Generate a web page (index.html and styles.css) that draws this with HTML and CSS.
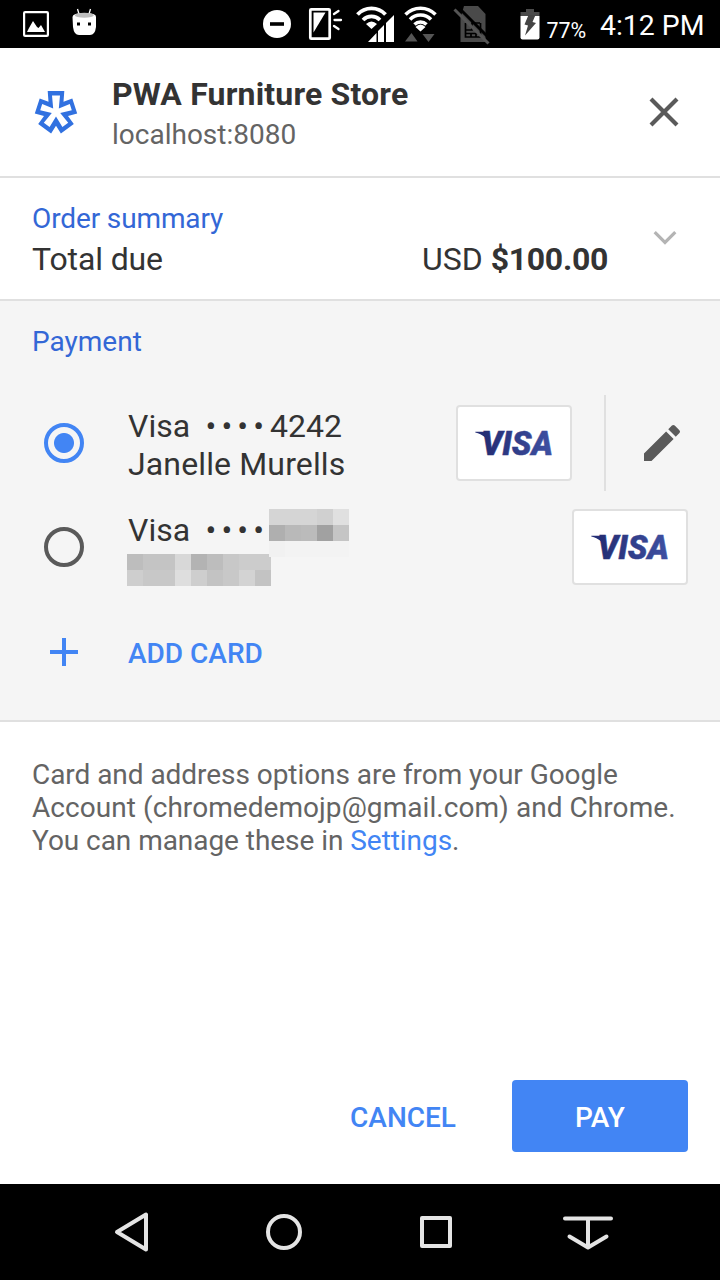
FILE: index.html
```html
<!DOCTYPE html>
<html lang="en">
<head>
<meta charset="utf-8">
<title>PWA Furniture Store</title>
<link rel="stylesheet" href="styles.css">
</head>
<body>
<svg class="defs" width="0" height="0" aria-hidden="true">
  <defs>
    <linearGradient id="visa-blue" x1="0" y1="0" x2="1" y2="0">
      <stop offset="0" stop-color="#232c72"/><stop offset="1" stop-color="#3f51a3"/>
    </linearGradient>
    <symbol id="visa" viewBox="0 0 112 72">
      <path d="M17.300 24.800h11.500l2.500 12c-2-5.500-6.500-9.500-14-11.300z" fill="#252e76"/>
      <text class="visa-word" x="23.500" y="48.400" textLength="71.500" lengthAdjust="spacingAndGlyphs" fill="url(#visa-blue)" stroke="url(#visa-blue)" stroke-width=".5">VISA</text>
    </symbol>
  </defs>
</svg>
<div class="screen">
  <div class="status">
    <svg width="110" height="48" viewBox="0 0 110 48">
      <rect x="24.100" y="12.100" width="23.800" height="23.800" rx="1" fill="none" stroke="#fff" stroke-width="2.200"/>
      <path d="M27 32l2-4 4-7 4 6 1.500 1 2.500-3 4 7z" fill="#fff"/>
      <path d="M72.500 17q0-4 12-4t11.500 4v10q-1 8-6 8h-11q-5 0-6-8z" fill="#fff"/>
      <path d="M77.500 9l1.500 5M90.500 9L89 14" stroke="#fff" stroke-width="1.300"/>
      <ellipse cx="84.300" cy="15.300" rx="9.500" ry="2.500" fill="#bdbdbd"/>
      <path d="M77 22.500h3v3h-3zM88 22.500h3v3h-3z" fill="#000"/>
    </svg>
    <svg class="status-right" width="290" height="48" viewBox="255 0 290 48">
      <circle cx="277" cy="24" r="14" fill="#fff"/>
      <path d="M270 24h14" stroke="#000" stroke-width="3.600"/>
      <rect x="310.300" y="9.300" width="19.400" height="29.400" rx="1" fill="none" stroke="#fff" stroke-width="2.700"/>
      <path d="M313.500 12.500h12l-12 20z" fill="#fff"/>
      <path d="M334 14l4.500-3M334.500 20h6.500M334 26l4.500 3" stroke="#fff" stroke-width="2.300" stroke-linecap="round"/>
      <g fill="none" stroke="#fff" stroke-width="3.800">
        <path d="M357.500 14.500a19 19 0 0 1 28 0M363 20a12 12 0 0 1 17 0"/>
        <path d="M405.500 14.500a21 21 0 0 1 30 0M410 19.500a14.500 14.500 0 0 1 21 0M414.500 24.500a8.500 8.500 0 0 1 12 0" stroke-width="3.500"/>
      </g>
      <path d="M366 24q5.500-5 11 0l-5.500 5zM415.500 27q5-5 10 0l-5 4.500z" fill="#fff"/>
      <path d="M368 42l8.500-9V42zM378 42V31l6-6V42zM386 42V23l8-8V42z" fill="#fff"/>
      <path d="M405 41.500l6.500-8.500 6 8.500zM422.500 34h12l-6 8z" fill="#555"/>
      <path d="M464 6h14l7.500 8v28h-25V18z" fill="#4a4a4a"/>
      <path d="M465.500 23v14h15V23M466 30h6v-7h8M466 33.500h14M471 33.500v4M476 33.500v4" fill="none" stroke="#000" stroke-width="1.700"/>
      <path d="M457.500 6.500l33 33" stroke="#000" stroke-width="3"/>
      <path d="M454.500 9.500l34 34" stroke="#555" stroke-width="3"/>
      <path d="M520.500 16v-4h5.500V9h8v3h5.500v4z" fill="#4a4a4a"/>
      <path d="M520.500 16h19v21.500q0 2-2 2h-15q-2 0-2-2z" fill="#fff"/>
      <path d="M528.500 15h7l-3 7 3.500 1L525 35.500l3-10-3.500-1z" fill="#444"/>
    </svg>
    <span class="battery">77%</span>
    <span class="clock">4:12 PM</span>
  </div>

  <header class="merchant">
    <svg class="merchant-logo" width="48" height="48" viewBox="32 88 48 48">
      <path fill="#3171e0" d="M47.700 91h16.600l-.8 10.700 8.800-3.200 4.900 15-9.200 2.600 5.800 7.900-12.900 9.600-4.900-7.900-4.900 7.900-12.900-9.600 5.800-7.900-9.200-2.600 4.900-15 8.800 3.200z"/>
      <path fill="#fff" d="M52 95.500h8l-1.200 13 11-4.600 2 6.400-11.600 2.700 8 9.700-5.800 4.300-6.400-10.500-6.400 10.500-5.800-4.300 8-9.700-11.600-2.700 2-6.400 11 4.600z"/>
    </svg>
    <div class="merchant-name">
      <h1>PWA Furniture Store</h1>
      <p>localhost:8080</p>
    </div>
    <svg class="close" width="32" height="32" viewBox="0 0 32 32"><path d="M3 3l26 26M29 3L3 29" stroke="#5a5a5a" stroke-width="4.200"/></svg>
  </header>

  <section class="summary">
    <div class="summary-text">
      <h2 class="tight">Order summary</h2>
      <div class="total"><span class="tight">Total due</span><span>USD <b>$100.00</b></span></div>
    </div>
    <svg class="chevron" width="24" height="16" viewBox="0 0 24 16"><path d="M1.700 2.200L12 12.500 22.300 2.200" fill="none" stroke="#b4b4b4" stroke-width="3.200"/></svg>
  </section>

  <section class="payment">
    <h2>Payment</h2>
    <div class="option">
      <span class="radio selected"></span>
      <div class="label">
        <div class="line">Visa <span class="dots">••••</span><span class="digits">4242</span></div>
        <div class="line holder">Janelle Murells</div>
      </div>
      <svg class="card" width="116" height="76"><use href="#visa" width="112" height="72"/></svg>
      <div class="edit">
        <svg width="48" height="48" viewBox="0 0 24 24"><path fill="#5a5a5a" d="M3 17.250V21h3.750L17.810 9.940l-3.750-3.750L3 17.250zM20.710 7.040a1 1 0 0 0 0-1.410l-2.340-2.340a1 1 0 0 0-1.410 0l-1.830 1.830 3.750 3.750 1.830-1.830z"/></svg>
      </div>
    </div>
    <div class="option">
      <span class="radio"></span>
      <div class="label">
        <div class="line">Visa <span class="dots">••••</span><svg class="mask-number" width="80" height="48" viewBox="0 0 5 3" shape-rendering="crispEdges">
          <path fill="#d5d5d5" d="M0 0h3v1H0z"/><path fill="#d0d0d0" d="M3 0h1v1H3z"/><path fill="#e0e0e0" d="M4 0h1v1H4z"/>
          <path fill="#afafaf" d="M0 1h1v1H0z"/><path fill="#b9b9b9" d="M1 1h1v1H1z"/><path fill="#bbb" d="M2 1h1v1H2z"/><path fill="#a1a1a1" d="M3 1h1v1H3z"/><path fill="#c5c5c5" d="M4 1h1v1H4z"/>
          <path fill="#f1f1f1" d="M0 2h1v1H0z"/><path fill="#f3f3f3" d="M1 2h4v1H1z"/></svg></div>
        <div class="line"><svg class="mask-name" width="144" height="32" viewBox="0 0 9 2" shape-rendering="crispEdges">
          <path fill="#bdbdbd" d="M0 0h1v1H0zM5 0h1v1H5z"/><path fill="#c4c4c4" d="M1 0h2v1H1z"/><path fill="#d8d8d8" d="M3 0h1v1H3z"/><path fill="#b3b3b3" d="M4 0h1v1H4z"/><path fill="#c8c8c8" d="M6 0h1v1H6zM1 1h2v1H1zM6 1h1v1H6z"/><path fill="#ccc" d="M7 0h2v1H7z"/>
          <path fill="#cecece" d="M0 1h1v1H0zM4 1h1v1H4z"/><path fill="#dedede" d="M3 1h1v1H3z"/><path fill="#c3c3c3" d="M5 1h1v1H5zM8 1h1v1H8z"/><path fill="#d3d3d3" d="M7 1h1v1H7z"/></svg></div>
      </div>
      <svg class="card" width="116" height="76"><use href="#visa" width="112" height="72"/></svg>
    </div>
    <div class="add">
      <svg width="28" height="28" viewBox="0 0 28 28"><path d="M14 0v28M0 14h28" stroke="#4285f4" stroke-width="4"/></svg>
      <span>ADD CARD</span>
    </div>
  </section>

  <p class="note"><span class="tight-line">Card and address options are from your Google</span><br><span class="wide-line">Account (chromedemojp@gmail.com) and Chrome.</span><br><span class="tight-line">You can manage these in <a>Settings</a>.</span></p>

  <div class="actions">
    <span class="cancel">CANCEL</span>
    <span class="pay">PAY</span>
  </div>

  <nav class="navbar">
    <svg width="720" height="96" viewBox="0 1184 720 96" fill="none" stroke="#e4e4e4" stroke-width="4" stroke-linecap="round" stroke-linejoin="round">
      <path d="M117 1232l29-17.500v35z"/>
      <circle cx="284" cy="1232" r="16"/>
      <rect x="422" y="1218" width="28" height="28"/>
      <path d="M565 1218.500h46M588 1219v28M569.500 1236.500l18.500 11 18.500-11"/>
    </svg>
  </nav>
</div>
</body>
</html>
```
FILE: styles.css
```css
* { box-sizing: border-box; margin: 0; padding: 0; }
body { font-family: Roboto, sans-serif; color: #333; background: #fff; }
svg { display: block; flex: none; }
.defs { position: absolute; }
.screen { width: 720px; height: 1280px; display: flex; flex-direction: column; overflow: hidden; }
.status { height: 48px; flex: none; background: #000; color: #fff; display: flex; padding-right: 16px; }
.status-right { margin-left: auto; }
.battery { width: 55px; padding-left: 1.500px; font-size: 21.400px; line-height: 61px; }
.clock { width: 104px; font-size: 28.400px; line-height: 51px; white-space: nowrap; }
.merchant { height: 130px; flex: none; display: flex; padding: 27px 40px 0 32px; border-bottom: 2px solid #e0e0e0; }
.merchant-logo { margin-top: 13px; }
.merchant-name { margin-left: 32px; flex: 1; }
h1 { font-size: 32px; line-height: 38px; font-weight: 700; letter-spacing: 0.180px; }
.merchant-name p { margin-top: 5px; font-size: 28px; line-height: 33px; color: #646464; }
.close { margin-top: 21px; }
h2 { font-size: 28px; line-height: 33px; font-weight: 400; color: #3367d6; }
.tight { letter-spacing: -0.120px; }
.summary { height: 123px; flex: none; display: flex; padding: 24px 43px 0 32px; border-bottom: 2px solid #e0e0e0; }
.summary-text { width: 576px; }
.total { margin-top: 5px; display: flex; justify-content: space-between; font-size: 32px; line-height: 38px; }
.total b { letter-spacing: -0.300px; }
.chevron { margin: 28px 0 0 auto; }
.payment { height: 421px; flex: none; background: #f5f5f5; padding: 24px 32px 0; border-bottom: 2px solid #e0e0e0; }
.payment h2 { margin-bottom: 37px; }
.option { height: 96px; margin-bottom: 8px; display: flex; align-items: center; }
.radio { width: 40px; height: 40px; margin-left: 12px; border: 4px solid #5a5a5a; border-radius: 50%; flex: none; }
.radio.selected { border-color: #4285f4; background: radial-gradient(circle, #4285f4 9.500px, transparent 10.500px); }
.label { margin-left: 44px; padding-top: 3px; flex: 1; font-size: 32px; }
.line { height: 38px; line-height: 38px; display: flex; white-space: pre; }
.holder { letter-spacing: 0.140px; }
.dots { letter-spacing: 5.100px; margin-left: 7.500px; }
.digits { margin-left: 1px; }
.mask-number { position: relative; z-index: 1; margin-top: -2px; }
.mask-name { margin: 5px 0 0 -1px; }
.card { border: 2px solid #e0e0e0; border-radius: 4px; background: #fff; }
.visa-word { font: italic 900 33px Roboto, sans-serif; }
.edit { width: 116px; height: 96px; margin-left: 32px; margin-right: -32px; border-left: 2px solid #e0e0e0; display: flex; align-items: center; padding-left: 32px; }
.add { height: 98px; display: flex; align-items: center; padding-left: 18px; color: #4285f4; font-size: 28px; font-weight: 500; }
.add span { margin-left: 50px; padding-top: 2px; }
.note { padding: 36px 32px 0; font-size: 28px; line-height: 33px; color: #646464; white-space: nowrap; }
.tight-line { letter-spacing: -0.050px; }
.wide-line { letter-spacing: 0.060px; }
.note a { color: #4285f4; }
.actions { height: 104px; margin-top: auto; padding: 0 32px 32px; display: flex; justify-content: flex-end; font-size: 28px; font-weight: 500; line-height: 75px; }
.cancel { color: #4285f4; margin-right: 56px; }
.pay { width: 176px; height: 72px; border-radius: 4px; background: #4285f4; color: #fff; text-align: center; }
.navbar { height: 96px; flex: none; background: #000; }
```
